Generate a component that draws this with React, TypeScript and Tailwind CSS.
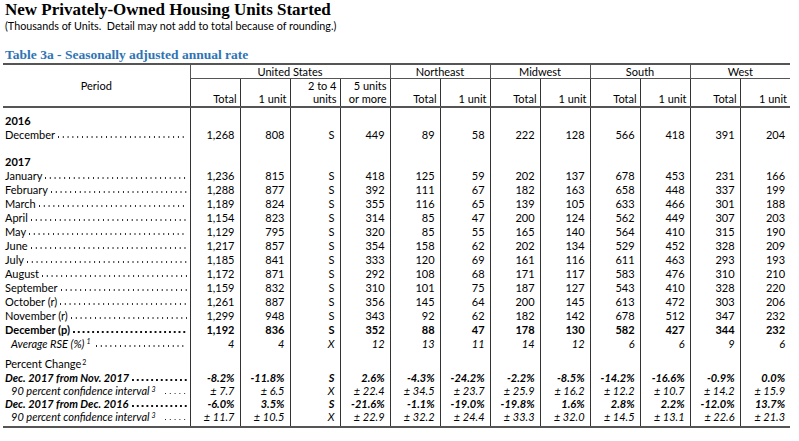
import React from "react";

type Style = "n" | "b" | "i" | "bi";
type DataRow = {
  kind: "data";
  label: React.ReactNode;
  vals?: string[];
  st: Style;
  indent?: boolean;
  dots?: boolean;
  h: string;
};
type SpacerRow = { kind: "spacer"; h: string; last?: boolean };
type Row = DataRow | SpacerRow;

const months: [string, string[], Style?][] = [
  ["January", ["1,236", "815", "S", "418", "125", "59", "202", "137", "678", "453", "231", "166"]],
  ["February", ["1,288", "877", "S", "392", "111", "67", "182", "163", "658", "448", "337", "199"]],
  ["March", ["1,189", "824", "S", "355", "116", "65", "139", "105", "633", "466", "301", "188"]],
  ["April", ["1,154", "823", "S", "314", "85", "47", "200", "124", "562", "449", "307", "203"]],
  ["May", ["1,129", "795", "S", "320", "85", "55", "165", "140", "564", "410", "315", "190"]],
  ["June", ["1,217", "857", "S", "354", "158", "62", "202", "134", "529", "452", "328", "209"]],
  ["July", ["1,185", "841", "S", "333", "120", "69", "161", "116", "611", "463", "293", "193"]],
  ["August", ["1,172", "871", "S", "292", "108", "68", "171", "117", "583", "476", "310", "210"]],
  ["September", ["1,159", "832", "S", "310", "101", "75", "187", "127", "543", "410", "328", "220"]],
  ["October (r)", ["1,261", "887", "S", "356", "145", "64", "200", "145", "613", "472", "303", "206"]],
  ["November (r)", ["1,299", "948", "S", "343", "92", "62", "182", "142", "678", "512", "347", "232"]],
  ["December (p)", ["1,192", "836", "S", "352", "88", "47", "178", "130", "582", "427", "344", "232"], "b"],
];

const ci = (
  <>
    90 percent confidence interval<sup className="text-[7px] ml-[2px]">3</sup>
    <span className="inline-block w-[6px]" />
  </>
);

const rows: Row[] = [
  { kind: "spacer", h: "h-[6px]" },
  { kind: "data", label: "2016", st: "b", h: "h-[14px]" },
  {
    kind: "data",
    label: "December",
    vals: ["1,268", "808", "S", "449", "89", "58", "222", "128", "566", "418", "391", "204"],
    st: "n",
    dots: true,
    h: "h-[14px]",
  },
  { kind: "spacer", h: "h-[13px]" },
  { kind: "data", label: "2017", st: "b", h: "h-[14px]" },
  ...months.map(
    ([m, v, s]): Row => ({ kind: "data", label: m, vals: v, st: s ?? "n", dots: true, h: "h-[14px]" })
  ),
  {
    kind: "data",
    label: (
      <>
        Average RSE (%)<sup className="text-[7px] ml-[2px]">1</sup>
        <span className="inline-block w-[3px]" />
      </>
    ),
    vals: ["4", "4", "X", "12", "13", "11", "14", "12", "6", "6", "9", "6"],
    st: "i",
    indent: true,
    dots: true,
    h: "h-[14px]",
  },
  { kind: "spacer", h: "h-[6px]" },
  {
    kind: "data",
    label: (
      <>
        Percent Change<sup className="text-[7px] ml-[1px]">2</sup>
      </>
    ),
    st: "n",
    h: "h-[15px]",
  },
  {
    kind: "data",
    label: "Dec. 2017 from Nov. 2017",
    vals: ["-8.2%", "-11.8%", "S", "2.6%", "-4.3%", "-24.2%", "-2.2%", "-8.5%", "-14.2%", "-16.6%", "-0.9%", "0.0%"],
    st: "bi",
    dots: true,
    h: "h-[13px]",
  },
  {
    kind: "data",
    label: ci,
    vals: ["± 7.7", "± 6.5", "X", "± 22.4", "± 34.5", "± 23.7", "± 25.9", "± 16.2", "± 12.2", "± 10.7", "± 14.2", "± 15.9"],
    st: "i",
    indent: true,
    dots: true,
    h: "h-[13px]",
  },
  {
    kind: "data",
    label: "Dec. 2017 from Dec. 2016",
    vals: ["-6.0%", "3.5%", "S", "-21.6%", "-1.1%", "-19.0%", "-19.8%", "1.6%", "2.8%", "2.2%", "-12.0%", "13.7%"],
    st: "bi",
    dots: true,
    h: "h-[13px]",
  },
  {
    kind: "data",
    label: ci,
    vals: ["± 11.7", "± 10.5", "X", "± 22.9", "± 32.2", "± 24.4", "± 33.3", "± 32.0", "± 14.5", "± 13.1", "± 22.6", "± 21.3"],
    st: "i",
    indent: true,
    dots: true,
    h: "h-[13px]",
  },
  { kind: "spacer", h: "h-[4px]", last: true },
];

const styleClass: Record<Style, string> = {
  n: "",
  b: "font-bold",
  i: "italic",
  bi: "font-bold italic",
};

const VLINE = "border-l border-[#333]";

function Leader({ bold }: { bold: boolean }) {
  return (
    <span
      className={`flex-1 min-w-0 self-end mb-[3px] ml-[3px] bg-repeat-x bg-left ${
        bold
          ? "h-[1.6px] bg-[length:4.8px_1.6px] bg-[linear-gradient(to_right,#111_1.6px,transparent_1.6px)]"
          : "h-[1.3px] bg-[length:4.8px_1.3px] bg-[linear-gradient(to_right,#222_1.3px,transparent_1.3px)]"
      }`}
    />
  );
}

export default function App() {
  return (
    <div className="w-[799px] h-[441px] bg-white text-black font-['Lato',sans-serif] overflow-hidden">
      <div className="pl-[5px]">
        <div className="font-['Liberation_Serif',serif] font-bold text-[17px] leading-[18px] pt-[1px]">
          New Privately-Owned Housing Units Started
        </div>
        <div className="text-[10.75px] leading-[14px]">
          (Thousands of Units.&nbsp; Detail may not add to total because of rounding.)
        </div>
        <div className="font-['Liberation_Serif',serif] font-bold text-[13.5px] leading-[16px] text-[#2e74b5] mt-[14px]">
          Table 3a - Seasonally adjusted annual rate
        </div>
      </div>
      <table className="ml-[3px] w-[787px] table-fixed border-collapse text-[11px]">
        <colgroup>
          <col className="w-[187px]" />
          {Array.from({ length: 12 }).map((_, i) => (
            <col key={i} className="w-[50px]" />
          ))}
        </colgroup>
        <thead>
          <tr className="h-[13px]">
            <th
              rowSpan={2}
              className="p-0 font-normal text-center align-middle border-t-2 border-b-2 border-[#555] leading-[13px]"
            >
              Period
            </th>
            <th
              colSpan={4}
              className={`p-0 font-normal text-center leading-[13px] border-t-2 border-[#555] ${VLINE} border-b border-b-[#555]`}
            >
              United States
            </th>
            {["Northeast", "Midwest", "South", "West"].map((r) => (
              <th
                key={r}
                colSpan={2}
                className={`p-0 font-normal text-center leading-[13px] border-t-2 border-[#555] ${VLINE} border-b border-b-[#555]`}
              >
                {r}
              </th>
            ))}
          </tr>
          <tr className="h-[27px]">
            {[
              ["Total"],
              ["1 unit"],
              ["2 to 4", "units"],
              ["5 units", "or more"],
              ["Total"],
              ["1 unit"],
              ["Total"],
              ["1 unit"],
              ["Total"],
              ["1 unit"],
              ["Total"],
              ["1 unit"],
            ].map((lines, i) => (
              <th
                key={i}
                className={`p-0 pr-[3px] pb-[1px] font-normal text-right align-bottom leading-[13px] ${VLINE} border-b-2 border-b-[#555]`}
              >
                {lines.map((l, j) => (
                  <div key={j} className="whitespace-nowrap">
                    {l}
                  </div>
                ))}
              </th>
            ))}
          </tr>
        </thead>
        <tbody>
          {rows.map((r, idx) => {
            if (r.kind === "spacer") {
              const bottom = r.last ? "border-b-2 border-b-[#555]" : "";
              return (
                <tr key={idx} className={r.h}>
                  <td className={`p-0 ${bottom}`} />
                  {Array.from({ length: 12 }).map((_, i) => (
                    <td key={i} className={`p-0 ${VLINE} ${bottom}`} />
                  ))}
                </tr>
              );
            }
            const sc = styleClass[r.st];
            const bold = r.st === "b" || r.st === "bi";
            return (
              <tr key={idx} className={r.h}>
                <td className={`p-0 align-middle leading-[13px] ${sc}`}>
                  <div className={`flex whitespace-nowrap pr-[3px] ${r.indent ? "pl-[8px]" : "pl-[2px]"}`}>
                    <span className="shrink-0">{r.label}</span>
                    {r.dots && <Leader bold={bold} />}
                  </div>
                </td>
                {Array.from({ length: 12 }).map((_, i) => (
                  <td
                    key={i}
                    className={`p-0 pr-[5px] text-right align-middle leading-[13px] whitespace-nowrap ${VLINE} ${sc}`}
                  >
                    {r.vals ? r.vals[i] : ""}
                  </td>
                ))}
              </tr>
            );
          })}
        </tbody>
      </table>
    </div>
  );
}
